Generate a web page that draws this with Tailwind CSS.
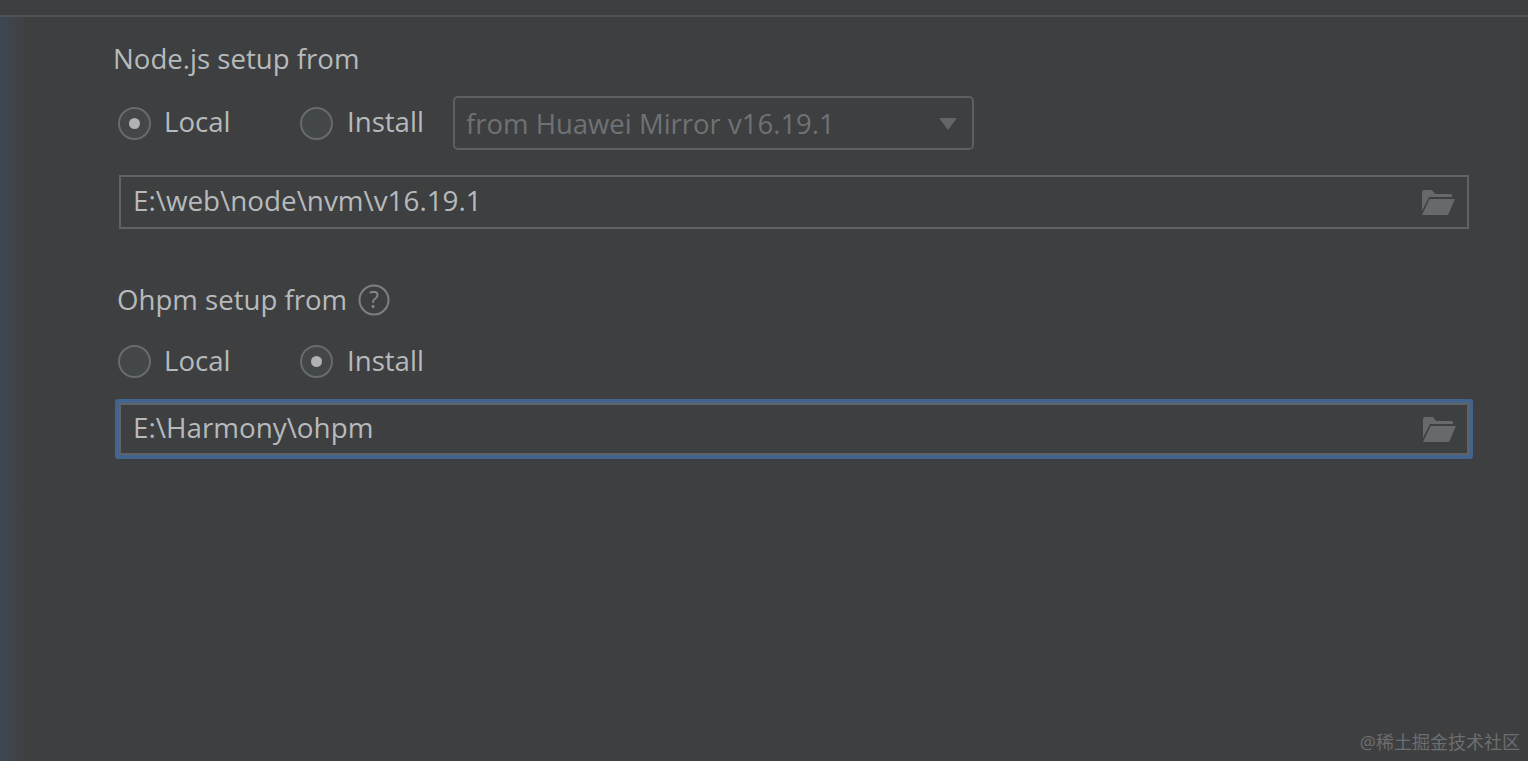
<!DOCTYPE html>
<html lang="en">
<head>
  <meta charset="UTF-8">
  <title>Node setup</title>
  <script src="https://cdn.jsdelivr.net/npm/@tailwindcss/browser@4"></script>
</head>
<body class="bg-[#3e3f41] text-[#b7babb] font-['Open_Sans','Noto_Sans_CJK_SC',sans-serif] text-[27.6px] h-[761px] w-[1528px] overflow-hidden relative">
  <!-- top rule -->
  <div class="h-[17px] border-b-2 border-[#505356]"></div>

  <div class="flex h-[744px]">
    <div class="w-[24px] bg-gradient-to-r from-[#3d4751] to-[#3e4144]"></div>

    <div class="pl-[90px] w-[1480px]">
      <div class="h-[36px] mt-[24px] -ml-px flex items-center leading-none">Node.js setup from</div>

      <!-- node radios -->
      <div class="flex items-center h-[54px] mt-[19px] pl-[4px]">
        <div class="w-[33px] h-[33px] rounded-full border-2 border-[#666b6d] bg-[#43474a] flex items-center justify-center">
          <div class="w-[11px] h-[11px] rounded-full bg-[#b0b3b5]"></div>
        </div>
        <span class="ml-[13px] w-[136px] pb-[2px]">Local</span>
        <div class="w-[33px] h-[33px] rounded-full border-2 border-[#666b6d] bg-[#43474a]"></div>
        <span class="ml-[14px] w-[106px] pb-[2px]">Install</span>
        <div class="w-[521px] h-[54px] rounded-[5px] border-2 border-[#5c6063] flex items-center justify-between pl-[11px] pr-[15px] text-[#6f7274] text-[27.5px]">
          <span class="pt-[2px]">from Huawei Mirror v16.19.1</span>
          <svg class="w-[18px] h-[12px] mt-[2px]" viewBox="0 0 18 12"><path d="M0 0h18L9 12z" fill="#636668"/></svg>
        </div>
      </div>

      <div class="ml-[5px] w-[1350px] h-[54px] mt-[25px] border-2 border-[#606366] flex items-center justify-between pl-[12px] pr-[12px] text-[27.8px]">
        <span class="pb-[2px]">E:\web\node\nvm\v16.19.1</span>
        <svg class="w-[34px] h-[26px]" viewBox="0 0 34 26">
          <path d="M1 2.5 2.5 1H11l3 4h16l1 1v2H8L1 22z" fill="#666a6c"/>
          <path d="M8.5 10H34l-7 16H1z" fill="#666a6c"/>
        </svg>
      </div>

      <div class="flex items-center h-[36px] mt-[53px] ml-[3px] leading-none">
        <span>Ohpm setup from</span>
        <svg class="ml-[11px] w-[32px] h-[32px]" viewBox="0 0 32 32" fill="none">
          <circle cx="16" cy="16" r="14.5" stroke="#7d8183" stroke-width="2"/>
          <text x="16" y="24" text-anchor="middle" font-size="23" fill="#85898b">?</text>
        </svg>
      </div>

      <!-- ohpm radios -->
      <div class="flex items-center h-[36px] mt-[25px] pl-[4px]">
        <div class="w-[33px] h-[33px] rounded-full border-2 border-[#666b6d] bg-[#43474a]"></div>
        <span class="ml-[13px] w-[136px]">Local</span>
        <div class="w-[33px] h-[33px] rounded-full border-2 border-[#666b6d] bg-[#43474a] flex items-center justify-center">
          <div class="w-[11px] h-[11px] rounded-full bg-[#b0b3b5]"></div>
        </div>
        <span class="ml-[14px]">Install</span>
      </div>

      <div class="ml-[1px] w-[1358px] h-[60px] mt-[20px] rounded-[3px] border-[4px] border-[#42648f] outline-2 -outline-offset-6 outline-[#606366] flex items-center justify-between pl-[14px] pr-[13px] text-[27.8px]">
        <span class="pb-[2px]">E:\Harmony\ohpm</span>
        <svg class="w-[34px] h-[26px]" viewBox="0 0 34 26">
          <path d="M1 2.5 2.5 1H11l3 4h16l1 1v2H8L1 22z" fill="#666a6c"/>
          <path d="M8.5 10H34l-7 16H1z" fill="#666a6c"/>
        </svg>
      </div>
    </div>
  </div>

  <!-- watermark -->
  <div class="absolute right-[8px] bottom-[10px] text-[18px] leading-none text-[#6c6e70]">@稀土掘金技术社区</div>
</body>
</html>
